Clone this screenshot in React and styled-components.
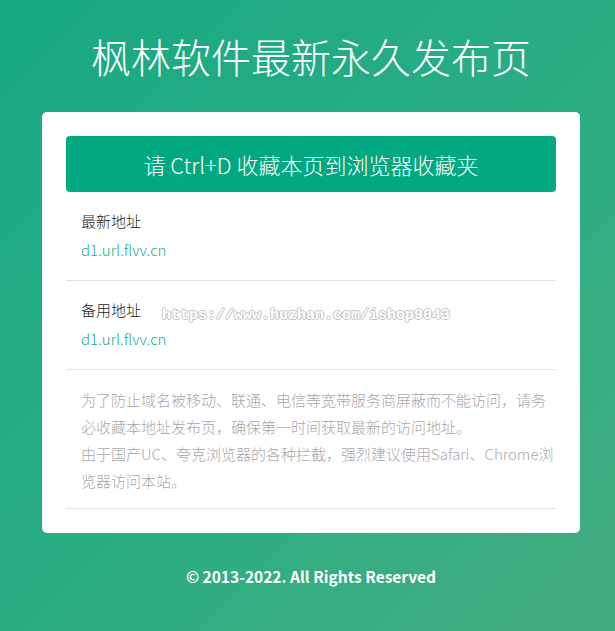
import React from "react";
import styled, { createGlobalStyle } from "styled-components";

const Global = createGlobalStyle`
  html, body { margin: 0; padding: 0; }
  body {
    min-height: 631px;
    background: linear-gradient(135deg, #17a983 0%, #2aad83 50%, #44ad80 100%);
    font-family: "Noto Sans CJK SC", "Noto Sans", sans-serif;
  }
`;

const Page = styled.div`
  width: 538px;
  margin-left: 42px;
  padding-top: 26px;
  min-height: 631px;
  box-sizing: border-box;
`;

const Title = styled.h1`
  margin: 0 0 26px;
  text-align: center;
  color: #fff;
  font-size: 40px;
  font-weight: 300;
  line-height: 60px;
  letter-spacing: 0;
`;

const Card = styled.div`
  background: #fff;
  border-radius: 5px;
  padding: 24px;
`;

const Button = styled.div`
  height: 56px;
  border-radius: 4px;
  background: #02a980;
  color: #fff;
  display: flex;
  align-items: center;
  justify-content: center;
  font-size: 22px;
  font-weight: 300;
`;

const Row = styled.div`
  position: relative;
  padding: 15px 0 16px 15px;
  border-bottom: 1px solid #e2e2e2;
`;

const Label = styled.div`
  font-size: 15px;
  line-height: 28px;
  color: #222;
  font-weight: 300;
`;

const Link = styled.a`
  display: block;
  margin-top: 1px;
  font-size: 15px;
  line-height: 28px;
  color: #18ad88;
  text-decoration: none;
  font-weight: 300;
`;

const Watermark = styled.span`
  position: absolute;
  left: 96px;
  top: 25px;
  font-family: "Liberation Mono", monospace;
  font-size: 15px;
  line-height: 20px;
  font-weight: 700;
  color: #fff;
  text-shadow: 1px 0 0 #c4c4c4, -1px 0 0 #c4c4c4, 0 1px 0 #c4c4c4, 0 -1px 0 #c4c4c4;
  white-space: nowrap;
  pointer-events: none;
`;

const Notice = styled.div`
  padding: 16px 0 14px 15px;
  border-bottom: 1px solid #e2e2e2;
  font-size: 15px;
  line-height: 27px;
  color: #a8a8a8;
  font-weight: 300;
`;

const Footer = styled.div`
  margin-top: 31px;
  text-align: center;
  color: #fff;
  font-size: 15.5px;
  font-weight: 700;
  line-height: 24px;
`;

export default function App() {
  return (
    <>
      <Global />
      <Page>
        <Title>枫林软件最新永久发布页</Title>
        <Card>
          <Button>请 Ctrl+D 收藏本页到浏览器收藏夹</Button>
          <Row>
            <Label>最新地址</Label>
            <Link href="#">d1.url.flvv.cn</Link>
          </Row>
          <Row>
            <Label>备用地址</Label>
            <Link href="#">d1.url.flvv.cn</Link>
            <Watermark>https://www.huzhan.com/ishop9043</Watermark>
          </Row>
          <Notice>
            为了防止域名被移动、联通、电信等宽带服务商屏蔽而不能访问，请务必收藏本地址发布页，确保第一时间获取最新的访问地址。
            <br />
            由于国产UC、夸克浏览器的各种拦截，强烈建议使用Safari、Chrome浏览器访问本站。
          </Notice>
        </Card>
        <Footer>© 2013-2022. All Rights Reserved</Footer>
      </Page>
    </>
  );
}
